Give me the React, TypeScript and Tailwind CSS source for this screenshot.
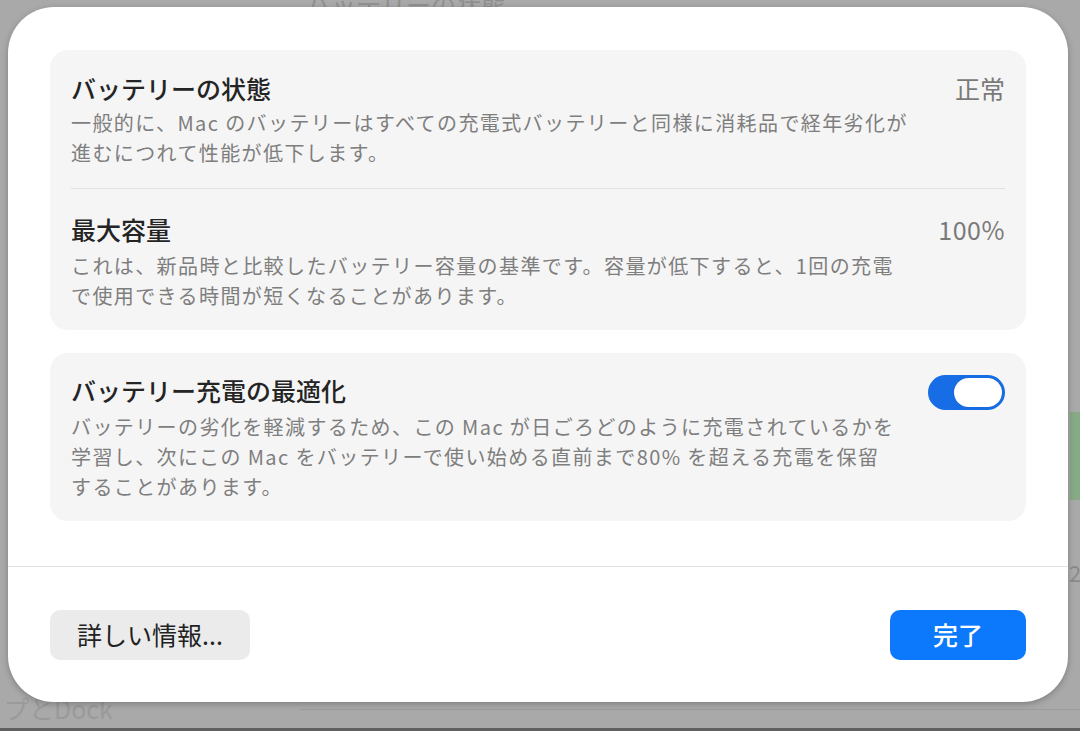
export default function App() {
  const font = { fontFamily: '"Noto Sans CJK JP", "Noto Sans", sans-serif' }

  return (
    <div className="relative w-[1080px] h-[731px] overflow-hidden bg-[#a9a9a9]" style={font}>
      {/* window behind the sheet */}
      <div className="absolute left-[306px] top-[-14px] text-[25px] text-[#909090]">バッテリーの状態</div>
      <div className="absolute left-[4px] top-[690px] text-[25px] text-[#9a9a9a]">プとDock</div>
      <div className="absolute left-[1070px] top-[412px] w-[10px] h-[88px] bg-[#86a986]" />
      <div className="absolute left-[1069px] top-[556px] text-[22px] text-[#8a8a8a]">2</div>
      <div className="absolute left-[300px] top-[709px] w-[780px] h-px bg-[#9c9c9c]" />
      <div className="absolute left-0 top-[728px] w-full h-[3px] bg-[#5f5f5f]" />

      {/* sheet */}
      <div className="absolute left-[8px] top-[7px] w-[1060px] h-[695px] rounded-[46px] bg-white shadow-[0_2px_6px_rgba(0,0,0,0.25)] flex flex-col">
        <div className="px-[42px] pt-[43px] flex flex-col gap-[23px]">
          <div className="rounded-[18px] bg-[#f5f5f5] px-[21px]">
            <div className="pt-[22px] pb-[20px] flex justify-between border-b border-[#e2e2e2]">
              <div>
                <div className="text-[25px] leading-[32px] font-medium text-[#242424]">バッテリーの状態</div>
                <div className="mt-[4px] text-[20px] leading-[30px] tracking-[1.4px] text-[#7e7e7e] whitespace-nowrap">
                  一般的に、Mac のバッテリーはすべての充電式バッテリーと同様に消耗品で経年劣化が
                  <br />
                  進むにつれて性能が低下します。
                </div>
              </div>
              <div className="text-[25px] leading-[32px] text-[#7a7a7a]">正常</div>
            </div>
            <div className="pt-[24px] pb-[19px] flex justify-between">
              <div>
                <div className="text-[25px] leading-[32px] font-medium text-[#242424]">最大容量</div>
                <div className="mt-[6px] text-[20px] leading-[30px] tracking-[1.4px] text-[#7e7e7e] whitespace-nowrap">
                  これは、新品時と比較したバッテリー容量の基準です。容量が低下すると、1回の充電
                  <br />
                  で使用できる時間が短くなることがあります。
                </div>
              </div>
              <div className="text-[25px] leading-[32px] tracking-[0.5px] text-[#7a7a7a]">100%</div>
            </div>
          </div>

          <div className="rounded-[18px] bg-[#f5f5f5] px-[21px] pt-[21px] pb-[19px] flex justify-between">
            <div>
              <div className="text-[25px] leading-[32px] font-medium text-[#242424]">バッテリー充電の最適化</div>
              <div className="mt-[6px] text-[20px] leading-[30px] tracking-[1.4px] text-[#7e7e7e] whitespace-nowrap">
                バッテリーの劣化を軽減するため、この Mac が日ごろどのように充電されているかを
                <br />
                学習し、次にこの Mac をバッテリーで使い始める直前まで80% を超える充電を保留
                <br />
                することがあります。
              </div>
            </div>
            <div className="mt-[1px] w-[77px] h-[35px] rounded-full bg-[#176de6] p-[3px] flex justify-end">
              <div className="w-[48px] h-[29px] rounded-full bg-white shadow-[0_0_1px_rgba(0,0,0,0.3)]" />
            </div>
          </div>
        </div>

        <div className="mt-[45px] h-px bg-[#e3e3e3]" />

        <div className="px-[42px] pt-[43px] flex justify-between">
          <button className="w-[200px] h-[50px] rounded-[10px] bg-[#ebebeb] text-[25px] text-[#222] flex items-center justify-center">
            詳しい情報...
          </button>
          <button className="w-[136px] h-[50px] rounded-[10px] bg-[#0c78fb] text-[25px] font-medium text-white flex items-center justify-center">
            完了
          </button>
        </div>
      </div>
    </div>
  )
}
